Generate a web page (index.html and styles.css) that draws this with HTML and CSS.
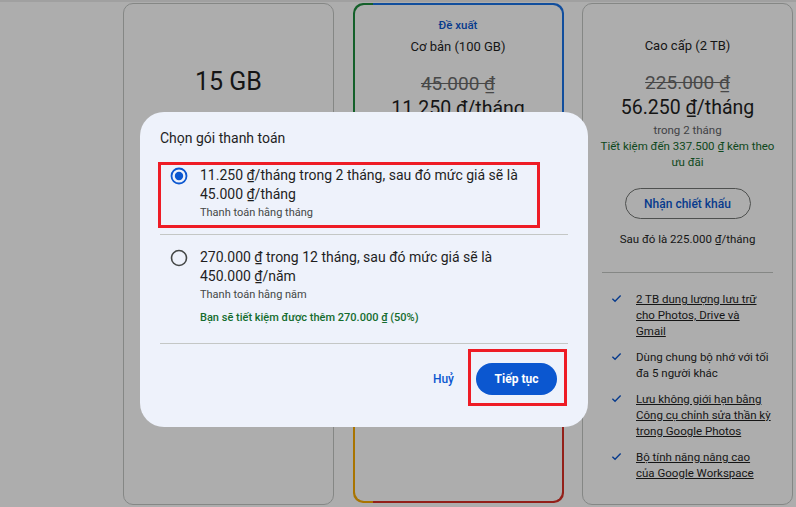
FILE: index.html
```html
<!DOCTYPE html>
<html lang="vi">
<head>
<meta charset="utf-8">
<title>Chọn gói thanh toán</title>
<link rel="stylesheet" href="styles.css">
</head>
<body>
<div class="topline"></div>
<div class="plans">
  <section class="card">
    <div class="label"></div>
    <div class="big">15 GB</div>
  </section>
  <section class="card featured">
    <div class="card-inner">
      <div class="label blue">Đề xuất</div>
      <div class="name">Cơ bản (100 GB)</div>
      <div class="old">45.000 ₫</div>
      <div class="price">11.250 ₫/tháng</div>
    </div>
  </section>
  <section class="card">
    <div class="label"></div>
    <div class="name">Cao cấp (2 TB)</div>
    <div class="old">225.000 ₫</div>
    <div class="price">56.250 ₫/tháng</div>
    <div class="period">trong 2 tháng</div>
    <div class="save">Tiết kiệm đến 337.500 ₫ kèm theo ưu đãi</div>
    <button class="outline-btn">Nhận chiết khấu</button>
    <div class="after">Sau đó là 225.000 ₫/tháng</div>
    <hr class="card-rule">
    <ul class="features">
      <li><svg class="check" viewBox="0 0 12 12"><path d="M1.5 6.3 L4.4 9 L10.5 2.8" fill="none" stroke="currentColor" stroke-width="1.5"/></svg><span class="link">2 TB dung lượng lưu trữ cho Photos, Drive và<br>Gmail</span></li>
      <li><svg class="check" viewBox="0 0 12 12"><path d="M1.5 6.3 L4.4 9 L10.5 2.8" fill="none" stroke="currentColor" stroke-width="1.5"/></svg><span>Dùng chung bộ nhớ với tối đa 5 người khác</span></li>
      <li><svg class="check" viewBox="0 0 12 12"><path d="M1.5 6.3 L4.4 9 L10.5 2.8" fill="none" stroke="currentColor" stroke-width="1.5"/></svg><span class="link">Lưu không giới hạn bằng Công cụ chỉnh sửa thần kỳ trong Google Photos</span></li>
      <li><svg class="check" viewBox="0 0 12 12"><path d="M1.5 6.3 L4.4 9 L10.5 2.8" fill="none" stroke="currentColor" stroke-width="1.5"/></svg><span class="link">Bộ tính năng nâng cao<br>của Google Workspace</span></li>
    </ul>
  </section>
</div>

<div class="scrim"></div>

<div class="dialog" role="dialog">
  <h2 class="dialog-title">Chọn gói thanh toán</h2>
  <div class="option first">
    <svg class="radio" viewBox="0 0 18 18"><circle cx="9" cy="9" r="7.5" fill="none" stroke="#0b57d0" stroke-width="1.8"/><circle cx="9" cy="9" r="4.2" fill="#0b57d0"/></svg>
    <div class="opt-text">
      <div class="opt-main">11.250 ₫/tháng trong 2 tháng, sau đó mức giá sẽ là 45.000 ₫/tháng</div>
      <div class="opt-sub">Thanh toán hằng tháng</div>
    </div>
  </div>
  <div class="option last">
    <svg class="radio" viewBox="0 0 18 18"><circle cx="9" cy="9" r="7.5" fill="none" stroke="#444746" stroke-width="1.6"/></svg>
    <div class="opt-text">
      <div class="opt-main">270.000 ₫ trong 12 tháng, sau đó mức giá sẽ là 450.000 ₫/năm</div>
      <div class="opt-sub">Thanh toán hằng năm</div>
      <div class="opt-save">Bạn sẽ tiết kiệm được thêm 270.000 ₫ (50%)</div>
    </div>
  </div>
  <div class="actions">
    <button class="text-btn">Huỷ</button>
    <button class="filled-btn">Tiếp tục</button>
  </div>
  <div class="mark mark-option"></div>
  <div class="mark mark-button"></div>
</div>
</body>
</html>
```

FILE: styles.css
```css
* { box-sizing: border-box; }
html, body {
  margin: 0;
  padding: 0;
  background: #ffffff;
  font-family: Roboto, "Noto Sans", Arial, sans-serif;
  color: #1f1f1f;
  overflow: hidden;
}
.topline {
  height: 2px;
  background: #ececec;
}
.plans {
  display: flex;
  gap: 18.5px;
  padding: 1px 0 0 123px;
}
.card {
  flex: 0 0 211px;
  height: 502px;
  border: 1px solid #c4c7c5;
  border-radius: 10px;
  background: #fff;
  display: flex;
  flex-direction: column;
  align-items: center;
  text-align: center;
}
.card.featured {
  border: none;
  padding: 2px;
  height: 500px;
  background: conic-gradient(from 0deg at 50% 50%,
    #1a73e8 0deg 125deg,
    #d93025 125deg 199deg,
    #f9ab00 199deg 275deg,
    #1e8e3e 275deg 341deg,
    #1a73e8 341deg 360deg);
}
.card-inner {
  width: 100%;
  height: 100%;
  background: #fff;
  border-radius: 9px;
  display: flex;
  flex-direction: column;
  align-items: center;
}
.label {
  height: 17px;
  margin-top: 12px;
  font-size: 11.5px;
  font-weight: 500;
  line-height: 17px;
}
.label.blue { color: #0b57d0; }
.big {
  margin-top: 34px;
  font-size: 25px;
  line-height: 30px;
}
.name {
  margin-top: 4px;
  font-size: 13px;
  line-height: 18px;
}
.old {
  margin-top: 15px;
  font-size: 19px;
  line-height: 25px;
  color: #6b6b6b;
  text-decoration: line-through;
}
.price {
  font-size: 19.5px;
  line-height: 26px;
}
.period {
  margin-top: 1px;
  font-size: 11.5px;
  line-height: 16px;
  color: #5f6368;
}
.save {
  width: 180px;
  font-size: 11.5px;
  line-height: 16px;
  color: #146c2e;
}
.outline-btn {
  margin-top: 18px;
  width: 126px;
  height: 31px;
  border: 1px solid #747775;
  border-radius: 16px;
  background: transparent;
  font-family: inherit;
  font-size: 12px;
  font-weight: 500;
  color: #0b57d0;
}
.after {
  margin-top: 12px;
  font-size: 11.5px;
  line-height: 16px;
  color: #1f1f1f;
}
.card-rule {
  width: 171px;
  margin: 25px 0 0 0;
  border: none;
  border-top: 1px solid #c4c7c5;
}
.features {
  list-style: none;
  margin: 18px 0 0 0;
  padding: 0 0 0 28px;
  align-self: stretch;
  text-align: left;
}
.features li {
  display: flex;
  gap: 14px;
  margin-bottom: 10px;
  font-size: 11.5px;
  line-height: 16px;
}
.check {
  flex: 0 0 11px;
  width: 11px;
  height: 11px;
  margin-top: 2px;
  color: #0b57d0;
}
.features span { width: 140px; }
.link { text-decoration: underline; }

.scrim {
  position: fixed;
  inset: 0;
  background: rgba(0, 0, 0, 0.32);
}
.dialog {
  position: fixed;
  left: 140px;
  top: 112px;
  width: 448px;
  height: 315px;
  padding: 0 20px;
  background: #eef2fb;
  border-radius: 24px;
}
.dialog-title {
  margin: 0;
  padding-top: 16px;
  padding-bottom: 5px;
  font-size: 14px;
  font-weight: 400;
  line-height: 20px;
  color: #1f1f1f;
}
.option {
  display: flex;
  gap: 12px;
  padding: 13px 0 12px 10px;
  border-bottom: 1px solid #c4c7c5;
}
.option.last { padding-bottom: 17px; }
.radio {
  flex: 0 0 18px;
  width: 18px;
  height: 18px;
  margin-top: 1px;
}
.opt-main {
  width: 330px;
  font-size: 14px;
  line-height: 19px;
  color: #1f1f1f;
}
.opt-sub {
  font-size: 11px;
  line-height: 18px;
  color: #444746;
}
.opt-save {
  margin-top: 5px;
  font-size: 11px;
  font-weight: 500;
  line-height: 17px;
  color: #146c2e;
}
.actions {
  display: flex;
  justify-content: flex-end;
  align-items: center;
  gap: 10px;
  padding: 19px 11px 0 0;
}
.text-btn {
  border: none;
  background: none;
  padding: 0 12px;
  height: 32px;
  font-family: inherit;
  font-size: 12px;
  font-weight: 500;
  color: #0b57d0;
}
.filled-btn {
  border: none;
  width: 81px;
  height: 32px;
  border-radius: 16px;
  background: #0b57d0;
  color: #fff;
  font-family: inherit;
  font-size: 12px;
  font-weight: 700;
}
.mark {
  position: absolute;
  border: 3px solid #ee1c25;
}
.mark-option {
  left: 18px;
  top: 50px;
  width: 382px;
  height: 66px;
}
.mark-button {
  left: 328px;
  top: 237px;
  width: 99px;
  height: 57px;
}
```
